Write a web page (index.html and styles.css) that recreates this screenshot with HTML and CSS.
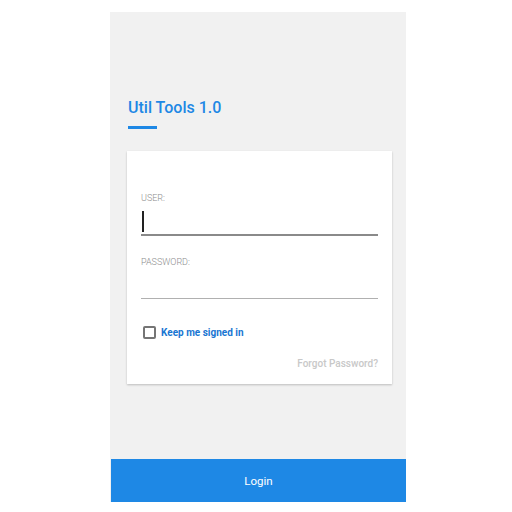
FILE: index.html
```html
<!DOCTYPE html>
<html>
<head>
<meta charset="utf-8">
<link rel="stylesheet" href="styles.css">
</head>
<body>
<div class="panel">
  <div class="head">
    <h1 class="title">Util Tools 1.0</h1>
    <div class="bar"></div>
  </div>
  <div class="card">
    <label class="label">USER:</label>
    <div class="field field-active"><span class="caret"></span></div>
    <label class="label label-pass">PASSWORD:</label>
    <div class="field"></div>
    <div class="keep">
      <span class="box"></span>
      <span class="keep-text">Keep me signed in</span>
    </div>
    <div class="forgot">Forgot Password?</div>
  </div>
  <div class="login">Login</div>
</div>
</body>
</html>
```
FILE: styles.css
```css
* { box-sizing: border-box; }
html, body { margin: 0; padding: 0; background: #ffffff; }
body { font-family: Roboto, "Liberation Sans", sans-serif; }
.panel {
  margin: 12px 0 0 110px;
  width: 296px;
  height: 490px;
  background: #f1f1f1;
  display: flex;
  flex-direction: column;
}
.head { padding: 86px 0 0 18px; }
.title {
  margin: 0;
  font-size: 16px;
  line-height: 20px;
  font-weight: 500;
  color: #1e88e5;
}
.bar {
  margin-top: 8px;
  width: 29px;
  height: 3px;
  background: #1e88e5;
}
.card {
  margin: 22px 14px 0 17px;
  background: #ffffff;
  padding: 41px 14px 14px 14px;
  box-shadow: 0 1px 2px rgba(0,0,0,0.22);
  display: flex;
  flex-direction: column;
}
.label {
  font-size: 9px;
  line-height: 12px;
  font-weight: 300;
  color: #8e8e8e;
}
.label-pass { margin-top: 20px; }
.field {
  position: relative;
  height: 31px;
  border-bottom: 1px solid #b0b0b0;
}
.field-active {
  height: 32px;
  border-bottom: 2px solid #8a8a8a;
}
.caret {
  position: absolute;
  left: 1px;
  top: 7px;
  width: 1.5px;
  height: 21px;
  background: #222;
}
.keep {
  margin-top: 27px;
  display: flex;
  align-items: center;
  height: 13px;
  padding-left: 2px;
}
.box {
  width: 13px;
  height: 13px;
  border: 2px solid #757575;
  border-radius: 2px;
}
.keep-text {
  margin-left: 5px;
  font-size: 10px;
  font-weight: 700;
  color: #1976d2;
}
.forgot {
  margin-top: 18px;
  text-align: right;
  font-size: 10px;
  line-height: 13px;
  font-weight: 500;
  color: #c8c8c8;
}
.login {
  margin: auto 0 0 1px;
  height: 43px;
  background: #1e88e5;
  color: #ffffff;
  font-size: 11.5px;
  display: flex;
  align-items: center;
  justify-content: center;
  box-shadow: 0 1px 0 #222;
}
```
